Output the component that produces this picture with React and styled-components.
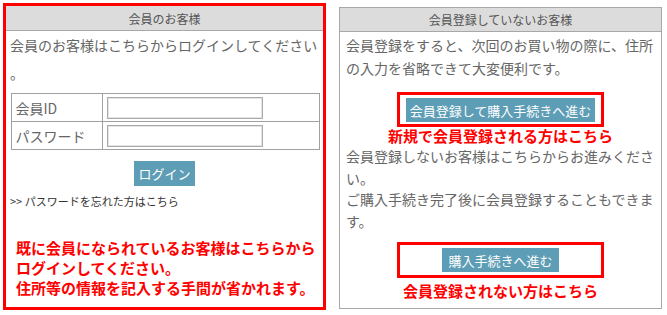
import React from 'react';
import styled, { createGlobalStyle } from 'styled-components';

const GlobalStyle = createGlobalStyle`
  body {
    margin: 0;
    background: #fff;
    font-family: "Noto Sans CJK JP", "Noto Sans", sans-serif;
    color: #666;
  }
`;

const Page = styled.div`
  display: flex;
  align-items: flex-start;
  gap: 13px;
  padding: 3px;
`;

const Panel = styled.section`
  box-sizing: border-box;
  width: 323px;
  height: ${(props) => props.height}px;
  margin-top: ${(props) => props.offset || 0}px;
  border: ${(props) => (props.highlight ? '3px solid #ff0000' : '1px solid #a8a8a8')};
  display: flex;
  flex-direction: column;
`;

const PanelHeader = styled.div`
  height: ${(props) => props.height}px;
  background-color: #dcdcdc;
  border-bottom: 1px solid #a8a8a8;
  display: flex;
  align-items: center;
  justify-content: center;
  font-size: 12px;
  color: #555;
`;

const Lead = styled.p`
  margin: 0;
  padding: ${(props) => props.pad || '0 4px'};
  font-size: 14px;
  line-height: ${(props) => props.lh}px;
  color: #666;
  line-break: ${(props) => (props.loose ? 'anywhere' : 'auto')};
`;

const LoginTable = styled.table`
  border-collapse: collapse;
  width: 309px;
  margin: 6px 0 0 4.5px;
  td {
    border: 1px solid #a0a0a0;
    height: 27px;
    padding: 0 4px;
    font-size: 14px;
    color: #666;
  }
  td:first-child {
    width: 82px;
  }
`;

const Field = styled.input`
  box-sizing: border-box;
  display: block;
  width: 156px;
  height: 22px;
  border: 1px solid #aaa;
  box-shadow: inset 0 0 0 1px #e4e4e4;
  outline: none;
`;

const ActionButton = styled.button`
  box-sizing: border-box;
  height: ${(props) => props.h || 24}px;
  padding: 0 ${(props) => props.px}px;
  background-color: #5d9db5;
  border: none;
  color: #fff;
  font-family: inherit;
  font-size: 13px;
  cursor: pointer;
`;

const Center = styled.div`
  display: flex;
  justify-content: center;
  margin-top: ${(props) => props.mt}px;
`;

const ForgotLink = styled.a`
  display: block;
  margin: 7px 0 0 4px;
  font-size: 11px;
  line-height: 16px;
  color: #333;
  text-decoration: none;
`;

const Notice = styled.p`
  margin: ${(props) => props.mt}px 0 0;
  padding: ${(props) => props.pad || 0};
  color: #ff0000;
  font-weight: bold;
  font-size: 15px;
  line-height: ${(props) => props.lh}px;
  text-align: ${(props) => props.align || 'left'};
`;

const RedFrame = styled.div`
  box-sizing: border-box;
  width: 207px;
  height: ${(props) => props.h}px;
  margin: ${(props) => props.mt}px auto 0;
  border: 3px solid #ff0000;
  display: flex;
  justify-content: center;
  padding-top: ${(props) => props.pt}px;
`;

const App = () => (
  <>
    <GlobalStyle />
    <Page>
      <Panel highlight height={307}>
        <PanelHeader height={24}>会員のお客様</PanelHeader>
        <Lead lh={28} loose>会員のお客様はこちらからログインしてください。</Lead>
        <LoginTable>
          <tbody>
            <tr>
              <td>会員ID</td>
              <td><Field type="text" /></td>
            </tr>
            <tr>
              <td>パスワード</td>
              <td><Field type="password" /></td>
            </tr>
          </tbody>
        </LoginTable>
        <Center mt={11}>
          <ActionButton h={25} px={4}>ログイン</ActionButton>
        </Center>
        <ForgotLink href="#">&gt;&gt; パスワードを忘れた方はこちら</ForgotLink>
        <Notice mt={29} lh={20} pad="0 0 0 10px">
          既に会員になられているお客様はこちらから
          <br />
          ログインしてください。
          <br />
          住所等の情報を記入する手間が省かれます。
        </Notice>
      </Panel>

      <Panel height={302} offset={4}>
        <PanelHeader height={23}>会員登録していないお客様</PanelHeader>
        <Lead lh={23} pad="2px 6px 0">会員登録をすると、次回のお買い物の際に、住所の入力を省略できて大変便利です。</Lead>
        <RedFrame h={35} mt={12} pt={3}>
          <ActionButton px={4}>会員登録して購入手続きへ進む</ActionButton>
        </RedFrame>
        <Notice mt={0} lh={18} align="center">新規で会員登録される方はこちら</Notice>
        <Lead lh={21.5} pad="1px 6px 0">
          会員登録しないお客様はこちらからお進みください。
          <br />
          ご購入手続き完了後に会員登録することもできます。
        </Lead>
        <RedFrame h={36} mt={10} pt={3}>
          <ActionButton px={6}>購入手続きへ進む</ActionButton>
        </RedFrame>
        <Notice mt={3} lh={20} align="center">会員登録されない方はこちら</Notice>
      </Panel>
    </Page>
  </>
);

export default App;
